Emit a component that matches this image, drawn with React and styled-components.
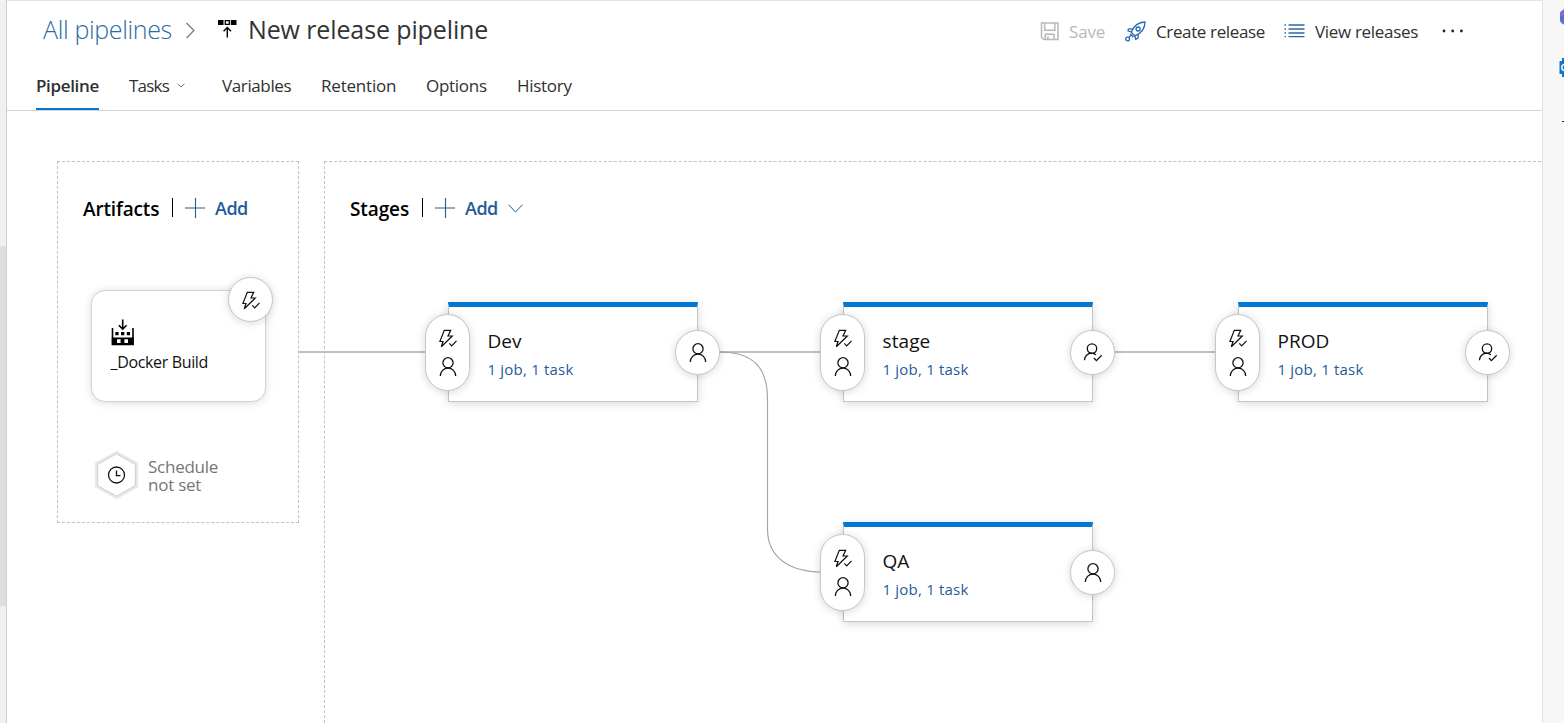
import React from "react";
import styled, { createGlobalStyle } from "styled-components";

const Global = createGlobalStyle`
  * { box-sizing: border-box; }
  body { margin: 0; background: #fff; font-family: "Open Sans", "Noto Sans", sans-serif; overflow: hidden; }
  svg { display: block; flex: none; fill: none; }
`;

const Window = styled.div`
  display: flex;
  width: 1564px;
  height: 723px;
  overflow: hidden;
`;
const LeftRail = styled.div`
  width: 7px;
  flex: none;
  background: #f0f0f0;
  border-right: 1px solid #cfcfcf;
  padding-top: 246px;
`;
const Thumb = styled.div`
  height: 360px;
  background: #dedede;
`;
const Main = styled.main`
  width: 1535px;
  flex: none;
  display: flex;
  flex-direction: column;
  border-top: 1px solid #e4e4e4;
`;
const RightRail = styled.aside`
  flex: 1;
  background: #f7f7f7;
  border-left: 1px solid #e2e2e2;
  display: flex;
  flex-direction: column;
  align-items: flex-end;
`;

const Header = styled.header`
  height: 110px;
  flex: none;
  border-bottom: 1px solid #d4d4d4;
  display: flex;
  flex-direction: column;
`;
const TitleRow = styled.div`
  display: flex;
  height: 60px;
  padding-left: 35px;
`;
const Crumb = styled.a`
  width: 143px;
  padding-left: 1px;
  font-size: 25px;
  line-height: 56px;
  font-weight: 300;
  letter-spacing: ${(p) => p.$track || 0}px;
  color: #2c6aa5;
  white-space: nowrap;
`;
const Title = styled.h1`
  margin: 0;
  width: 803px;
  padding-left: 11px;
  font-size: 25px;
  line-height: 56px;
  font-weight: 375;
  letter-spacing: -0.12px;
  color: #333;
  white-space: nowrap;
`;
const Glyph = styled.span`
  display: block;
  flex: none;
  width: ${(p) => p.$w}px;
  padding-top: ${(p) => p.$top || 0}px;
`;
const Action = styled.button`
  display: flex;
  align-items: center;
  gap: 10px;
  height: 60px;
  width: ${(p) => p.$w}px;
  padding: 0;
  border: 0;
  background: none;
  font: 375 17px "Open Sans", sans-serif;
  letter-spacing: ${(p) => p.$track}px;
  color: ${(p) => (p.$off ? "#b8b8b8" : "#303030")};
  white-space: nowrap;
`;
const Tabs = styled.nav`
  display: flex;
  gap: 30px;
  padding-left: 29px;
  height: 49px;
`;
const Tab = styled.a`
  display: flex;
  align-items: center;
  gap: 8px;
  width: ${(p) => p.$w}px;
  height: 49px;
  padding-top: 2px;
  font-size: 17px;
  font-weight: ${(p) => (p.$active ? 600 : 375)};
  letter-spacing: ${(p) => p.$track}px;
  border-bottom: 2px solid ${(p) => (p.$active ? "#0078d4" : "transparent")};
  color: #303030;
  white-space: nowrap;
`;

const Canvas = styled.section`
  position: relative;
  flex: 1;
  display: flex;
  gap: 25px;
  padding: 50px 1px 0 50px;
`;
const Panel = styled.div`
  border: 1px dashed #c2c2c2;
  ${(p) =>
    p.$open
      ? "flex: 1; border-right: 0; border-bottom: 0;"
      : "width: 242px; height: 362px;"}
`;
const PanelHead = styled.div`
  display: flex;
  align-items: center;
  height: 28px;
  margin: 33px 0 0 25px;
`;
const PanelTitle = styled.h2`
  margin: 0;
  width: ${(p) => p.$w}px;
  font-size: 19px;
  font-weight: 600;
  letter-spacing: ${(p) => p.$track}px;
  color: #000;
`;
const Rule = styled.span`
  width: 1px;
  height: 19px;
  margin: 0 12px 3px 12px;
  background: #000;
`;
const AddLink = styled.a`
  display: flex;
  align-items: center;
  gap: 10px;
  padding-bottom: 2px;
  font-size: 18px;
  font-weight: 600;
  letter-spacing: -0.5px;
  color: #1f5c99;
`;

const Wires = styled.svg`
  position: absolute;
  left: 0;
  top: 0;
`;
const Node = styled.article`
  position: absolute;
  left: ${(p) => p.$x}px;
  top: ${(p) => p.$y}px;
`;
const ArtifactCard = styled.div`
  width: 175px;
  height: 112px;
  padding: 28px 0 0 19px;
  border: 1px solid #d2d2d2;
  border-radius: 14px;
  background: #fff;
  box-shadow: 0 1px 9px rgba(0, 0, 0, 0.14);
`;
const ArtifactName = styled.div`
  margin: 5px 0 0 -0.5px;
  font-size: 16px;
  font-weight: 375;
  line-height: 22px;
  letter-spacing: -0.35px;
  color: #111;
  white-space: nowrap;
`;
const StageCard = styled.div`
  width: 250px;
  height: 100px;
  padding: 21px 0 0 38.5px;
  border: 1px solid #c4c4c4;
  border-top: 5px solid #0078d4;
  background: #fff;
  box-shadow: 0 2px 9px rgba(0, 0, 0, 0.15);
`;
const StageName = styled.div`
  font-size: 19px;
  font-weight: 375;
  line-height: 26px;
  letter-spacing: ${(p) => p.$track}px;
  color: #111;
`;
const StageLink = styled.a`
  display: block;
  margin-top: 4px;
  font-size: 15px;
  font-weight: 375;
  line-height: 22px;
  letter-spacing: 0.2px;
  color: #1f5c99;
`;
const Bubble = styled.div`
  position: absolute;
  left: ${(p) => p.$x}px;
  top: ${(p) => p.$y}px;
  width: 45px;
  height: ${(p) => (p.$tall ? 77 : 45)}px;
  display: flex;
  flex-direction: column;
  align-items: center;
  justify-content: center;
  gap: 8px;
  border: 1px solid #c6c6c6;
  border-radius: 23px;
  background: #fff;
  box-shadow: 0 1px 8px rgba(0, 0, 0, 0.16);
`;
const Schedule = styled.div`
  display: flex;
  align-items: center;
  gap: 8px;
  margin: 227px 0 0 34px;
`;
const ScheduleText = styled.span`
  width: 90px;
  padding-top: 2px;
  font-size: 17px;
  font-weight: 375;
  line-height: 18px;
  letter-spacing: -0.25px;
  color: #767676;
`;

const Bolt = () => (
  <svg width="20" height="20" stroke="#111" strokeWidth="1.2">
    <path d="M6.3 2.3H12.7L10 8H14.3L3.3 18.8L5 13.5H1.9Z" />
    <path d="M11.3 15.3L13.7 17.8L18.5 12.8" />
  </svg>
);
const Person = () => (
  <svg width="20" height="21" stroke="#111" strokeWidth="1.3">
    <circle cx="10" cy="6.8" r="5.1" />
    <path d="M2.3 20A7.7 8 0 0 1 17.7 20" />
  </svg>
);
const PersonCheck = () => (
  <svg width="20" height="20" stroke="#111" strokeWidth="1.3">
    <circle cx="9" cy="5.6" r="4.7" />
    <path d="M1.5 17.2C1.9 11.1 8 8.2 13 11.8M11 15L13.4 17.6L18.7 12.2" />
  </svg>
);
const Chevron = ({ w, h, color = "#777" }) => (
  <svg width={w} height={h} viewBox={`0 0 ${w} ${h}`} stroke={color} strokeWidth="1">
    <path d={`M.5 .7L${w / 2} ${h - 1}L${w - 0.5} .7`} />
  </svg>
);
const Plus = () => (
  <svg width="20" height="20" stroke="#1f5c99" strokeWidth="1.1">
    <path d="M0 10H20M10.5 0V20" />
  </svg>
);
const PipelineIcon = () => (
  <svg width="19" height="19">
    <path d="M0 1H5.5V6H0ZM12.8 1H18.5V6H12.8Z" fill="#000" />
    <path d="M7.3 1.7H11.3V5.3H7.3Z" stroke="#000" strokeWidth="1.3" />
    <path d="M9.3 18.5V8.5M5.6 12.3L9.3 8.5L13 12.3" stroke="#000" strokeWidth="1.4" />
  </svg>
);
const SaveIcon = () => (
  <svg width="19" height="19" stroke="#b8b8b8" strokeWidth="1.5">
    <path d="M1.5 1H18V17.5H3.8L1.5 15.2ZM4.7 1V8.3H14.8V1M5.3 17.5V12.3H14V17.5M8 14.3V17.5" />
  </svg>
);
const Rocket = () => (
  <svg width="21" height="21" stroke="#2767b0" strokeWidth="1.3">
    <path d="M6.2 11.3C8.5 5.5 12.5 1.2 20 1C20 8.2 15.8 12.5 9.8 14.9ZM8.3 7.6L3.4 8L3 9.8L6.5 11M13.2 12.8L13 17L10.8 18.3L9.8 15M5.2 13L8.4 16.2" />
    <circle cx="13.1" cy="8" r="2" />
    <circle cx="2.6" cy="18" r="1.9" />
    <path d="M4 16.2L6 14.3" />
  </svg>
);
const ListIcon = () => (
  <svg width="21" height="14" stroke="#2b67a8" strokeWidth="1.3">
    <path d="M4.5 1H20.5M4.5 5H20.5M4.5 9H20.5M4.5 12.6H20.5" />
    <path d="M.5 1H2M.5 5H2M.5 9H2M.5 12.6H2" />
  </svg>
);
const More = () => (
  <svg width="22" height="4">
    <g fill="#222">
      <circle cx="2" cy="2" r="1.4" />
      <circle cx="10.7" cy="2" r="1.4" />
      <circle cx="19.4" cy="2" r="1.4" />
    </g>
  </svg>
);
const BuildIcon = () => (
  <svg width="23" height="27">
    <path d="M1.5 9V25.5H22V9" stroke="#000" strokeWidth="1.6" />
    <path
      fill="#000"
      fillRule="evenodd"
      d="M4.3 13H7.6V16.3H4.3ZM10 13H13.3V16.3H10ZM15.8 13H19V16.3H15.8ZM.8 18.5H22.7V26H.8ZM6 20.2V24H9.6V20.2ZM13.4 20.2V24H17V20.2Z"
    />
    <path d="M11.7 .5V10M7.8 6.2L11.7 10.1L15.6 6.2" stroke="#000" strokeWidth="1.6" />
  </svg>
);
const Hexagon = () => (
  <svg width="48" height="50" viewBox="0 0 48 50">
    <path d="M24.5 2.7L44.3 13.8V36.2L24.5 47.3L4.7 36.2V13.8Z" stroke="#e8e8e8" strokeWidth="3.5" />
    <path d="M24.5 3.8L43.3 14.4V35.6L24.5 46.2L5.7 35.6V14.4Z" fill="#fff" stroke="#cfcfcf" />
    <circle cx="24.5" cy="25" r="8" stroke="#111" strokeWidth="1.3" />
    <path d="M24.5 20.5V25.7H28.5" stroke="#111" strokeWidth="1.3" />
  </svg>
);
const RailIcons = () => (
  <svg width="6" height="130">
    <path d="M6 9.5L3.5 11Q2 12 2 14V20Q2 22 3.5 23L6 24.8Z" fill="#5b6bd8" />
    <path d="M6 9.5L3.5 11Q2 12 2 14V16L6 15Z" fill="#8a68d6" />
    <path d="M4 58H6V77H4V74H1.5V61H4Z" fill="#0f76c9" />
    <path d="M6 64.5Q3.8 65 3.8 67.5T6 70.5" stroke="#fff" strokeWidth="1.4" />
    <path d="M4 121.5H6" stroke="#222" />
  </svg>
);

const stages = [
  { name: "Dev", x: 441, y: 191, track: 0, Post: Person },
  { name: "stage", x: 836, y: 191, track: 0.1, Post: PersonCheck },
  { name: "PROD", x: 1231, y: 191, track: 0, Post: PersonCheck },
  { name: "QA", x: 836, y: 411, track: -0.1, Post: Person },
];

const Stage = ({ name, x, y, track, Post }) => (
  <Node $x={x} $y={y}>
    <StageCard>
      <StageName $track={track}>{name}</StageName>
      <StageLink>1 job, 1 task</StageLink>
    </StageCard>
    <Bubble $x={-23} $y={12} $tall>
      <Bolt />
      <Person />
    </Bubble>
    <Bubble $x={227} $y={28}>
      <Post />
    </Bubble>
  </Node>
);

export default function App() {
  return (
    <Window>
      <Global />
      <LeftRail>
        <Thumb />
      </LeftRail>
      <Main>
        <Header>
          <TitleRow>
            <Crumb $track={-0.35}>All pipelines</Crumb>
            <Glyph $w={33} $top={21}>
              <svg width="11" height="17" stroke="#777" strokeWidth="1.2">
                <path d="M1.5 1L9 8.5L1.5 16" />
              </svg>
            </Glyph>
            <Glyph $w={19} $top={18}>
              <PipelineIcon />
            </Glyph>
            <Title>New release pipeline</Title>
            <Action $w={85} $track={-0.15} $off>
              <SaveIcon />
              Save
            </Action>
            <Action $w={159} $track={-0.37}>
              <Rocket />
              Create release
            </Action>
            <Action $w={158} $track={-0.32}>
              <ListIcon />
              View releases
            </Action>
            <Action $w={22} $track={0}>
              <More />
            </Action>
          </TitleRow>
          <Tabs>
            <Tab $w={63} $track={-0.35} $active>Pipeline</Tab>
            <Tab $w={63} $track={-0.8}>
              Tasks
              <Chevron w={8} h={5} />
            </Tab>
            <Tab $w={69} $track={-0.38}>Variables</Tab>
            <Tab $w={75} $track={-0.2}>Retention</Tab>
            <Tab $w={61} $track={-0.28}>Options</Tab>
            <Tab $w={56} $track={-0.28}>History</Tab>
          </Tabs>
        </Header>
        <Canvas>
          <Panel>
            <PanelHead>
              <PanelTitle $w={77} $track={-0.15}>Artifacts</PanelTitle>
              <Rule />
              <AddLink>
                <Plus />
                Add
              </AddLink>
            </PanelHead>
            <Schedule>
              <Hexagon />
              <ScheduleText>Schedule not set</ScheduleText>
            </Schedule>
          </Panel>
          <Panel $open>
            <PanelHead>
              <PanelTitle $w={60} $track={-0.1}>Stages</PanelTitle>
              <Rule />
              <AddLink>
                <Plus />
                Add
                <Chevron w={15} h={9} color="#1f5c99" />
              </AddLink>
            </PanelHead>
          </Panel>
          <Wires width="1534" height="612">
            <path d="M292 241H420M712 241H815M1106 241H1210" stroke="#c0c0c0" strokeWidth="2" />
            <path d="M712 241C748 241 760.5 258 760.5 288V418C760.5 446 782 461 815 461" stroke="#a6a6a6" strokeWidth="1.2" />
          </Wires>
          <Node $x={84} $y={179}>
            <ArtifactCard>
              <BuildIcon />
              <ArtifactName>_Docker Build</ArtifactName>
            </ArtifactCard>
            <Bubble $x={137} $y={-13}>
              <Bolt />
            </Bubble>
          </Node>
          {stages.map((s) => (
            <Stage key={s.name} {...s} />
          ))}
        </Canvas>
      </Main>
      <RightRail>
        <RailIcons />
      </RightRail>
    </Window>
  );
}
